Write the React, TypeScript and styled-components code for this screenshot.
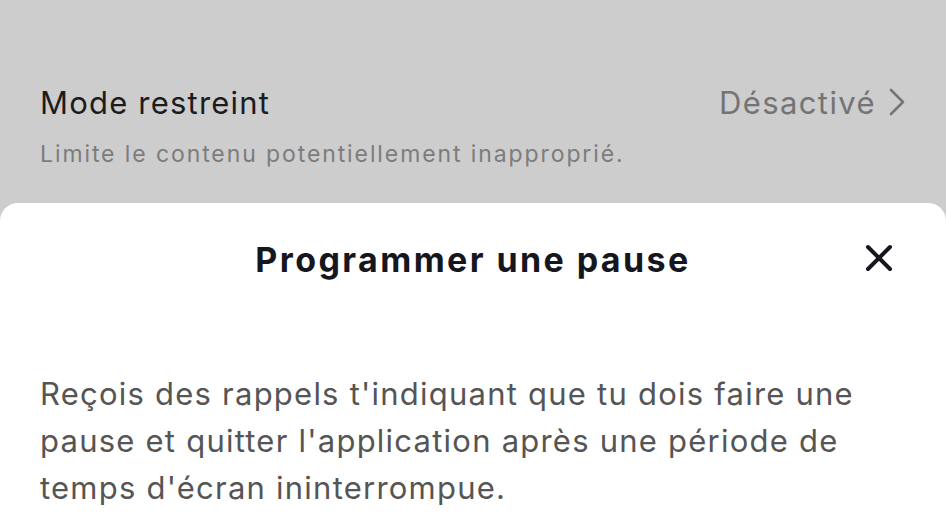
import React from 'react';
import styled, { createGlobalStyle } from 'styled-components';

const GlobalStyle = createGlobalStyle`
    html, body {
        margin: 0;
        padding: 0;
        background: #cdcdcd;
    }
    body {
        font-family: Inter, "Noto Sans", sans-serif;
    }
`;

const Screen = styled.div`
    width: 946px;
    height: 532px;
    overflow: hidden;
    display: flex;
    flex-direction: column;
    background: #cdcdcd;
`;

const SettingRow = styled.div`
    flex-shrink: 0;
    height: 203px;
    padding: 82px 40px 0 40px;
    box-sizing: border-box;
`;

const RowHeader = styled.div`
    display: flex;
    flex-direction: row;
    align-items: center;
    justify-content: space-between;
    height: 40px;
`;

const RowTitle = styled.div`
    font-size: 31px;
    letter-spacing: 1.2px;
    color: #1c1c1c;
`;

const RowValue = styled.div`
    display: flex;
    align-items: center;
    gap: 12px;
    font-size: 31px;
    letter-spacing: 1.4px;
    color: #747474;
`;

const RowDescription = styled.div`
    margin-top: 18px;
    font-size: 23px;
    letter-spacing: 1.9px;
    color: #7c7c7c;
`;

const Sheet = styled.div`
    flex: 1;
    background: #ffffff;
    border-radius: 18px 18px 0 0;
    display: flex;
    flex-direction: column;
`;

const SheetHeader = styled.div`
    position: relative;
    display: flex;
    justify-content: center;
    align-items: center;
    height: 112px;
`;

const SheetTitle = styled.div`
    font-size: 34px;
    font-weight: 700;
    letter-spacing: 2.4px;
    color: #16161e;
`;

const CloseButton = styled.div`
    position: absolute;
    right: 52px;
    top: 40px;
    width: 30px;
    height: 30px;
    display: flex;
    align-items: center;
    justify-content: center;
`;

const SheetBody = styled.p`
    margin: 55px 40px 0 40px;
    font-size: 31px;
    letter-spacing: 1.23px;
    line-height: 47px;
    color: #555555;
`;

function Chevron() {
    return (
        <svg width="18" height="30" viewBox="0 0 18 30" fill="none">
            <path d="M3 3 L15 15 L3 27" stroke="#747474" strokeWidth="2.6" strokeLinecap="round" strokeLinejoin="round" />
        </svg>
    );
}

function CloseIcon() {
    return (
        <svg width="28" height="28" viewBox="0 0 28 28" fill="none">
            <path d="M3 3 L25 25 M25 3 L3 25" stroke="#16161e" strokeWidth="4" strokeLinecap="round" />
        </svg>
    );
}

export default function App() {
    return (
        <>
            <GlobalStyle />
            <Screen>
                <SettingRow>
                    <RowHeader>
                        <RowTitle>Mode restreint</RowTitle>
                        <RowValue>
                            Désactivé
                            <Chevron />
                        </RowValue>
                    </RowHeader>
                    <RowDescription>Limite le contenu potentiellement inapproprié.</RowDescription>
                </SettingRow>

                <Sheet>
                    <SheetHeader>
                        <SheetTitle>Programmer une pause</SheetTitle>
                        <CloseButton>
                            <CloseIcon />
                        </CloseButton>
                    </SheetHeader>
                    <SheetBody>
                        Reçois des rappels t'indiquant que tu dois faire une pause et quitter l'application après une période de temps d'écran ininterrompue.
                    </SheetBody>
                </Sheet>
            </Screen>
        </>
    );
}
